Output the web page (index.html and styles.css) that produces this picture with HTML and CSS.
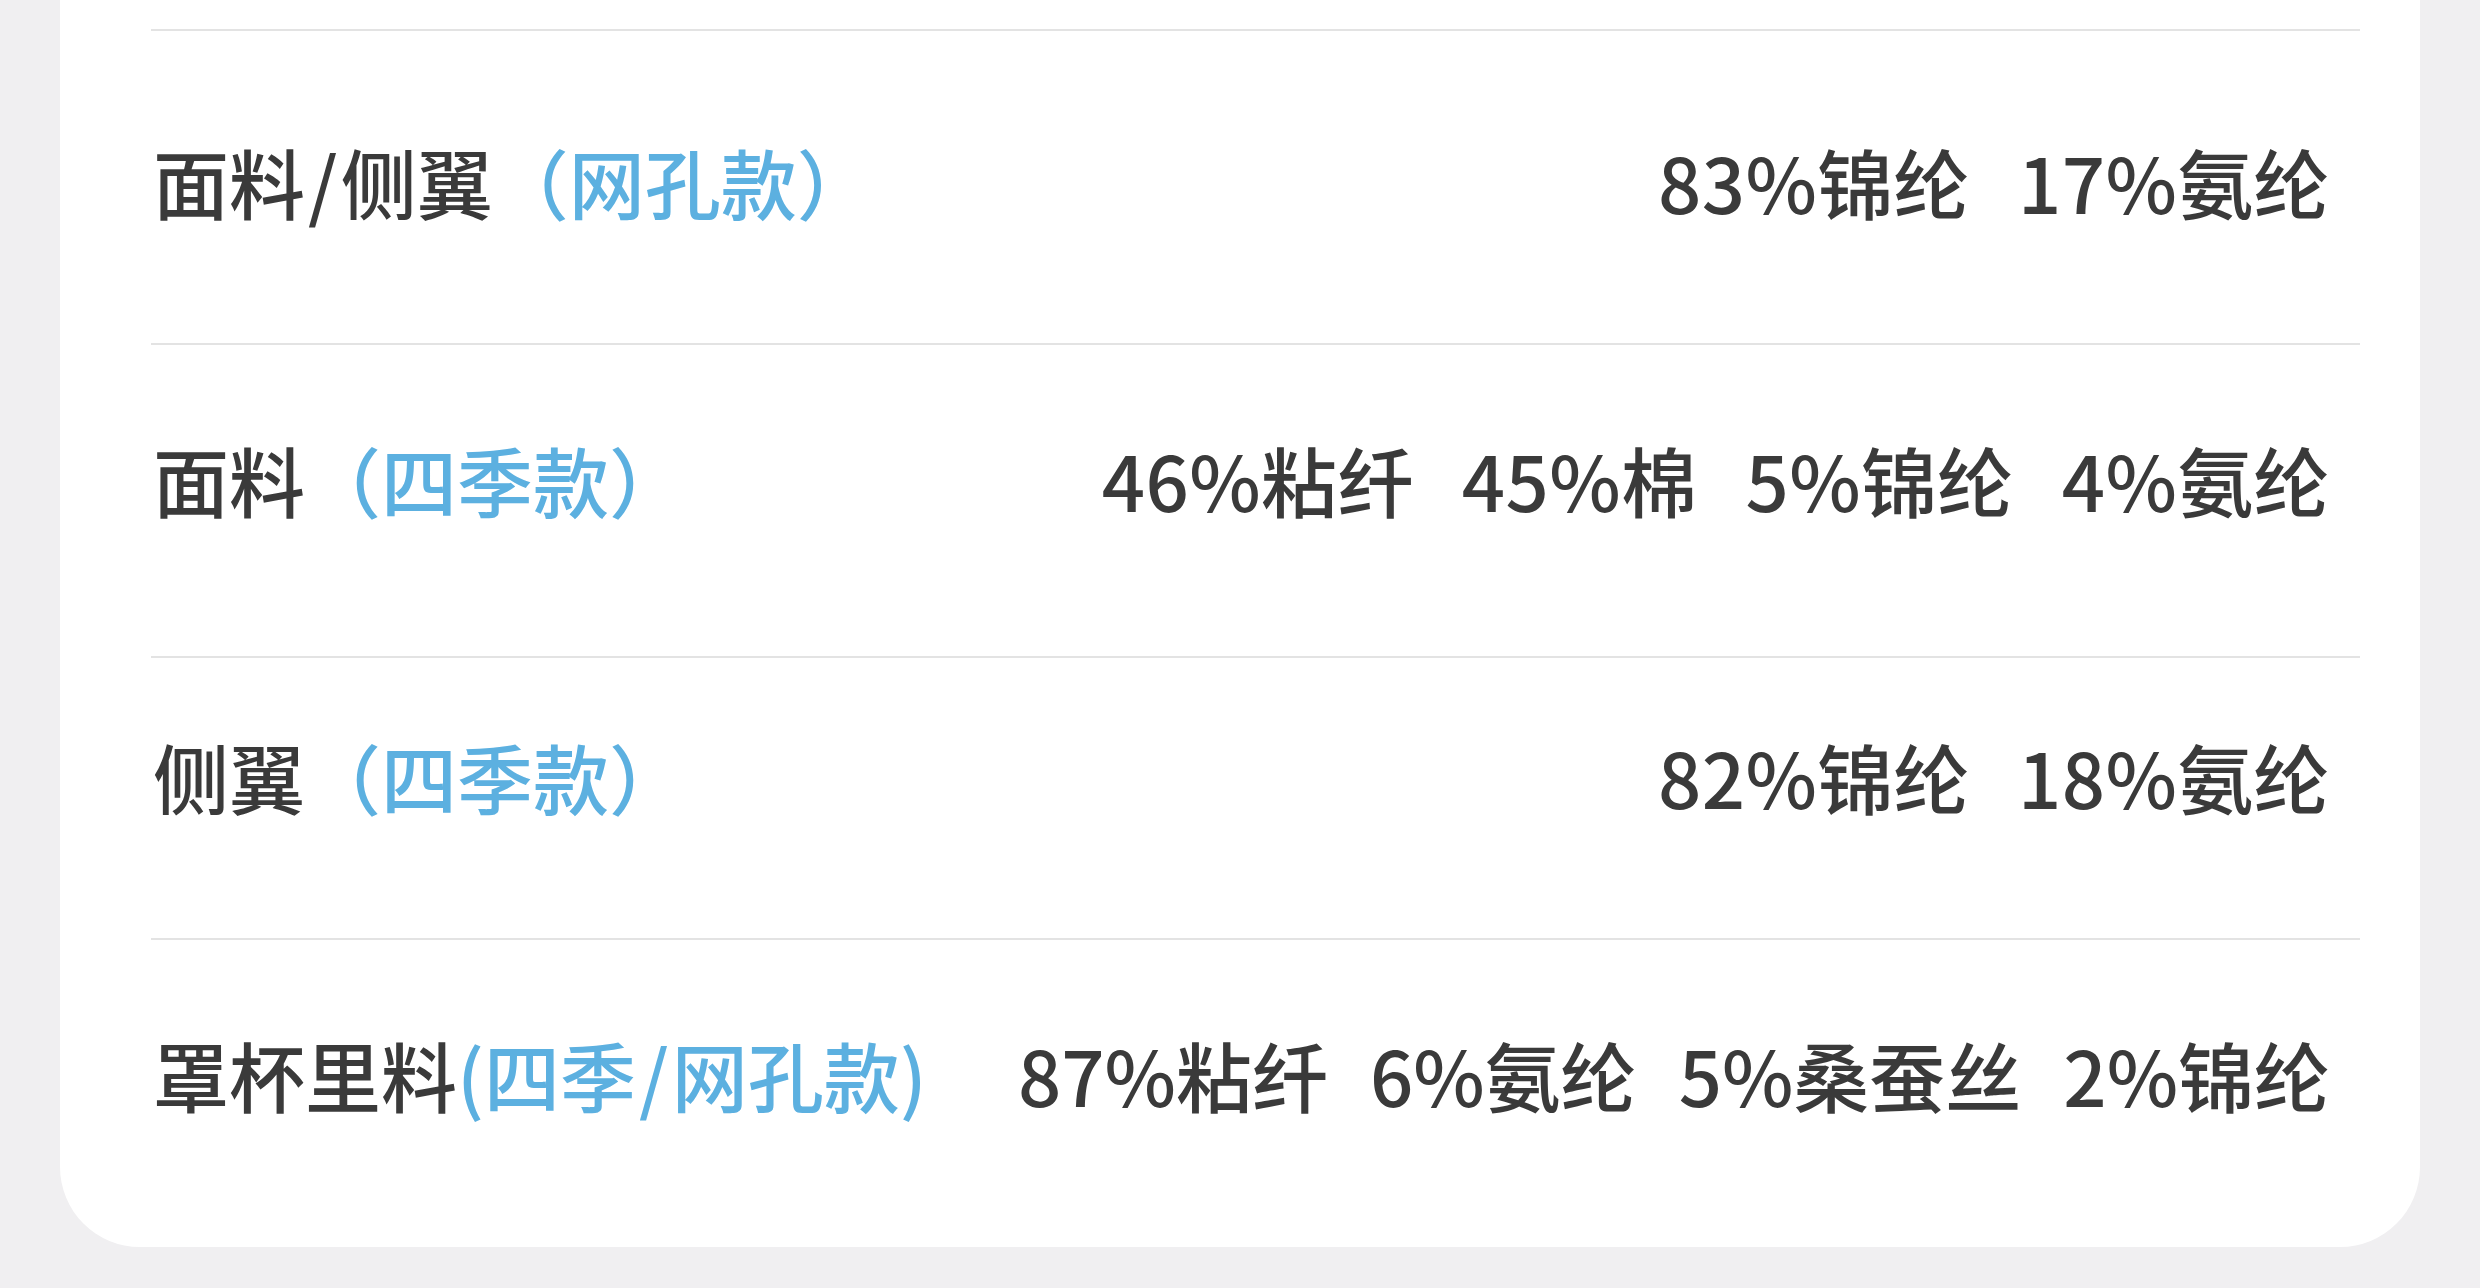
FILE: index.html
```html
<!DOCTYPE html>
<html lang="zh-CN">
<head>
<meta charset="utf-8">
<title>面料成分</title>
<link rel="stylesheet" href="styles.css">
</head>
<body>
<div class="page">
  <div class="card">
    <div class="row row-a">
      <div class="label">面料<span class="slash">/</span>侧翼<span class="note">（网孔款）</span></div>
      <div class="values"><span>83%锦纶</span><span>17%氨纶</span></div>
    </div>
    <div class="row row-b">
      <div class="label">面料<span class="note">（四季款）</span></div>
      <div class="values"><span>46%粘纤</span><span>45%棉</span><span>5%锦纶</span><span>4%氨纶</span></div>
    </div>
    <div class="row row-c">
      <div class="label">侧翼<span class="note">（四季款）</span></div>
      <div class="values"><span>82%锦纶</span><span>18%氨纶</span></div>
    </div>
    <div class="row row-d">
      <div class="label">罩杯里料<span class="note">(四季<span class="slash">/</span>网孔款)</span></div>
      <div class="values"><span>87%粘纤</span><span>6%氨纶</span><span>5%桑蚕丝</span><span>2%锦纶</span></div>
    </div>
  </div>
</div>
</body>
</html>
```

FILE: styles.css
```css
html, body {
  margin: 0;
  padding: 0;
}

body {
  background: #f0eff1;
  font-family: "Noto Sans CJK SC", "Noto Sans", sans-serif;
  color: #3a3a3a;
  width: 2480px;
  height: 1288px;
  overflow: hidden;
}

.page {
  padding: 0 60px;
}

.card {
  background: #ffffff;
  border-radius: 0 0 80px 80px;
  padding: 29px 60px 0 91px;
}

.row {
  display: flex;
  justify-content: space-between;
  align-items: center;
  box-sizing: border-box;
  border-top: 2px solid #e3e3e3;
  padding: 0 30px 42px 2px;
  font-size: 76px;
  font-weight: 500;
  line-height: 1;
}

.row-a {
  height: 314px;
  padding-bottom: 12px;
}

.row-b {
  height: 313px;
  padding-bottom: 43px;
}

.row-c {
  height: 282px;
  padding-bottom: 44px;
}

.row-d {
  height: 309px;
  padding-bottom: 39px;
}

.label {
  white-space: nowrap;
}

.slash {
  padding: 0 3px;
}

.note {
  color: #5cb0e0;
}

.values {
  display: flex;
  gap: 48px;
  white-space: nowrap;
  letter-spacing: 0.4px;
}

.row-d .values {
  gap: 42px;
  letter-spacing: 0;
}
```
